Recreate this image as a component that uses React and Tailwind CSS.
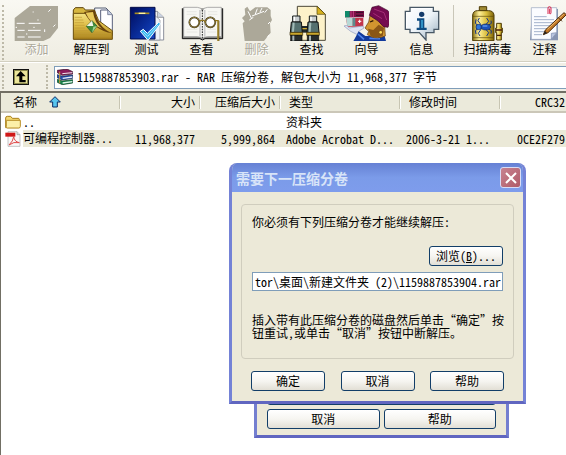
const buttonClass =
  "flex h-5 items-center justify-center rounded-[3px] border border-[#123e68] bg-gradient-to-b from-white via-[#f6f5f1] to-[#e2dfd5] text-black";

function Icon({ box, children }) {
  return (
    <svg viewBox={box} className="h-9 w-[45px] shrink-0" aria-hidden="true">
      {children}
    </svg>
  );
}

function AddIcon() {
  return (
    <Icon box="42 15 135 108">
      <path d="M90 18H174V84L150 114L130 123H44V54Z" fill="#aca899" />
      <path d="M50 70H74M86 70H122M52 91H74M84 91H122M52 111H74M84 111H122M145 35L152 28M98 36H101M160 80L166 74" stroke="#fff" strokeWidth="3" fill="none" />
      <path d="M47 82H51M100 82H104M78 102H82M112 60H116M134 88V96" stroke="#fff" strokeWidth="3" fill="none" />
    </Icon>
  );
}

function ExtractIcon() {
  return (
    <Icon box="207 15 135 108">
      <defs>
        <linearGradient id="folderGold" x1="0" y1="0" x2="0" y2="1">
          <stop offset="0" stopColor="#f8ea90" />
          <stop offset="0.5" stopColor="#dfbe48" />
          <stop offset="1" stopColor="#a8801a" />
        </linearGradient>
      </defs>
      <path d="M220 30L226 23H250L256 30H300V60H220Z" fill="#d6b640" stroke="#5c430a" strokeWidth="3" />
      <path d="M284 24H318L332 38V104H284Z" fill="#f4f6fb" stroke="#555d70" strokeWidth="3" />
      <path d="M302 30H323L337 44V106H302Z" fill="#fff" stroke="#59617b" strokeWidth="3" />
      <path d="M323 30V44H337" fill="#c3cce0" stroke="#59617b" strokeWidth="2" />
      <path d="M220 40H256L284 33L296 62L337 92V118H220Z" fill="url(#folderGold)" stroke="#6a4e0c" strokeWidth="3" />
      <path d="M252 36L285 30Q292 82 337 100Q282 92 252 36Z" fill="#68430d" />
      <path d="M257 38L279 36Q284 70 306 86Q272 74 257 38Z" fill="#e8c95b" />
      <path d="M224 52H246M224 60H250M224 68H252M224 76H254M224 84H256M224 92H266M224 100H330M224 108H332" stroke="#bf9935" strokeWidth="2" />
      <path d="M276 62L291 78L276 98L259 79Z" fill="#3e8b3b" stroke="#234f22" strokeWidth="2" />
      <path d="M260 78L276 62L280 78Z" fill="#f2f6e9" />
      <path d="M276 98L280 80L291 78Z" fill="#9ed48c" />
    </Icon>
  );
}

function TestIcon() {
  return (
    <Icon box="372 15 135 108">
      <defs>
        <linearGradient id="bookBlue" x1="0" y1="0" x2="1" y2="1">
          <stop offset="0" stopColor="#000c5c" />
          <stop offset="0.6" stopColor="#0a2f9e" />
          <stop offset="1" stopColor="#1747c8" />
        </linearGradient>
      </defs>
      <path d="M446 34H472L491 52V120H446Z" fill="#fff" stroke="#8a8f9c" strokeWidth="3" />
      <path d="M446 44H462L480 60V120H446Z" fill="#eef1f7" stroke="#8a8f9c" strokeWidth="2" />
      <path d="M472 34V52H491" fill="#ccd4e2" stroke="#777" strokeWidth="2" />
      <path d="M391 22H465V117H391Z" fill="url(#bookBlue)" stroke="#000a48" strokeWidth="3" />
      <path d="M404 40H448" stroke="#a88c22" strokeWidth="5" />
      <path d="M416 40H436" stroke="#fff4a0" strokeWidth="4" />
      <path d="M421 94L430 88L442 100L476 67L482 71L444 121Z" fill="#35b5ef" stroke="#fff" strokeWidth="3" />
      <path d="M430 97L443 109L474 75" stroke="#a6e4ff" strokeWidth="3" fill="none" />
    </Icon>
  );
}

function ViewIcon() {
  return (
    <Icon box="-3 15 135 108">
      <path d="M7 25V116H60L67 120L75 116H128V25" fill="#8b8b88" stroke="#111" strokeWidth="3" />
      <path d="M11 22H52Q65 22 67 33Q70 22 83 22H124V110H83Q70 110 67 117Q64 110 52 110H11Z" fill="#f7f7f3" stroke="#888" strokeWidth="2" />
      <path d="M60 30V110M74 30V110" stroke="#ccc" strokeWidth="5" />
      <path d="M67 30V117" stroke="#222" strokeWidth="3" strokeDasharray="5 3" />
      <path d="M20 35H50M20 43H50M84 35H112M84 43H112M20 88H52M20 96H52M82 88H108M82 96H108" stroke="#dfdfda" strokeWidth="2" />
      <circle cx="43" cy="67" r="15" fill="#fff" stroke="#2a220c" strokeWidth="5" />
      <circle cx="91" cy="67" r="15" fill="#fff" stroke="#2a220c" strokeWidth="5" />
      <circle cx="43" cy="67" r="15" fill="none" stroke="#c6ac51" strokeWidth="2" />
      <circle cx="91" cy="67" r="15" fill="none" stroke="#c6ac51" strokeWidth="2" />
      <path d="M58 65Q67 56 76 65M105 62H116" fill="none" stroke="#8d6f12" strokeWidth="4" />
      <path d="M115 62V123" stroke="#4a380b" strokeWidth="6" />
      <path d="M114 62V123" stroke="#dec04b" strokeWidth="3" />
    </Icon>
  );
}

function DeleteIcon() {
  return (
    <Icon box="162 15 135 108">
      <path d="M186 54L196 44L194 26L202 20L210 34L226 22H262L272 30V48L276 60L270 70L272 98L252 123H194L188 70L194 64Z" fill="#aca899" />
      <path d="M204 34L214 54M216 48L252 34M226 42L232 26M240 36L246 24M254 38L262 28M208 60L220 52M264 72L270 66M262 112L268 104" stroke="#fff" strokeWidth="3" fill="none" />
    </Icon>
  );
}

function Barrel({ x }) {
  return (
    <g transform={`translate(${x} 0)`}>
      <path d="M7 48H29V66H7Z" fill="#c9ced0" stroke="#151a1a" strokeWidth="3" />
      <path d="M12 50V64" stroke="#fff" strokeWidth="4" />
      <path d="M3 66H33L36 98H0Z" fill="#55706f" stroke="#111" strokeWidth="3" />
      <path d="M10 68L8 96" stroke="#a3bbb8" strokeWidth="6" />
      <path d="M-1 97H37V106H-1Z" fill="#c9a72e" stroke="#372906" strokeWidth="2" />
      <path d="M1 106H35V123H1Z" fill="#272c2c" stroke="#000" strokeWidth="2" />
      <path d="M9 107V122" stroke="#a9b6b7" strokeWidth="6" />
    </g>
  );
}

function FindIcon() {
  return (
    <Icon box="327 15 135 108">
      <path d="M352 19H412L436 43V121H352Z" fill="#fdf2c9" stroke="#4b4738" strokeWidth="3" />
      <path d="M411 19V43H436Z" fill="#d8b21e" stroke="#4f430e" strokeWidth="2" />
      <path d="M364 78H384V98H364Z" fill="#202829" />
      <path d="M360 86H390" stroke="#d0af35" strokeWidth="4" />
      <Barrel x={331} />
      <Barrel x={381} />
    </Icon>
  );
}

function WizardIcon() {
  return (
    <Icon box="-48 15 135 108">
      <path d="M-45 33H12V52H-45Z" fill="#7c1145" />
      <path d="M-45 33H-31V52H-45Z" fill="#0f8a6a" />
      <path d="M-27 33V52M-20 33V52" stroke="#c43c86" strokeWidth="3" />
      <path d="M-12 37H10M-12 46H10" stroke="#30102a" strokeWidth="3" />
      <path d="M-42 54H10V80H-38Z" fill="#c3344b" />
      <path d="M-42 54H-22V78H-38Z" fill="#b7d9d6" />
      <path d="M-22 54H-14V78H-22Z" fill="#5d8c8e" />
      <path d="M-6 64H4M-1 59V69" stroke="#fff" strokeWidth="3" />
      <path d="M-48 78L-40 76L-32 84L8 78L12 84L-4 94L-8 104L-28 94Z" fill="#dfe4f3" stroke="#8f9bbb" strokeWidth="2" />
      <path d="M-18 120L-4 94L16 108L74 108L78 123H-20Z" fill="#123a9c" />
      <path d="M-6 102L12 118M28 115L60 116" stroke="#4f83ec" strokeWidth="5" />
      <path d="M30 46L74 78L76 108Q50 118 34 110L22 104L26 94L15 84L26 66Z" fill="#d2952f" stroke="#5e370e" strokeWidth="2" />
      <path d="M24 86L40 90L56 74L72 84L68 108Q44 116 32 108Z" fill="#8a5616" />
      <path d="M30 66L40 62" stroke="#2a1604" strokeWidth="4" />
      <path d="M28 46L36 22L56 17L84 32L95 54L84 82L70 80L54 62Z" fill="#750b50" stroke="#3d0429" strokeWidth="2" />
      <path d="M42 27L72 38L80 60M40 40L66 56" stroke="#a52f77" strokeWidth="3" fill="none" />
      <circle cx="62" cy="97" r="4" fill="#ffe15c" />
    </Icon>
  );
}

function InfoIcon() {
  return (
    <Icon box="117 15 135 108">
      <defs>
        <linearGradient id="bubble" x1="0" y1="0" x2="1" y2="1">
          <stop offset="0" stopColor="#ffffff" />
          <stop offset="0.5" stopColor="#edf3f8" />
          <stop offset="1" stopColor="#98aebf" />
        </linearGradient>
      </defs>
      <path d="M150 22H220V34H236V88H222V98H198V120L178 98H150V88H136V34H150Z" fill="url(#bubble)" stroke="#485866" strokeWidth="4" />
      <path d="M153 26H217M140 38V84" stroke="#fff" strokeWidth="3" />
      <circle cx="185" cy="43" r="8" fill="#123a6b" />
      <path d="M171 55H193V83H200V90H170V83H178V62H171Z" fill="#0d4b82" />
      <path d="M186 60V84" stroke="#42b2e5" strokeWidth="4" />
    </Icon>
  );
}

function VirusIcon() {
  return (
    <Icon box="315 15 135 108">
      <defs>
        <linearGradient id="tankGold" x1="0" y1="0" x2="1" y2="0">
          <stop offset="0" stopColor="#8d7413" />
          <stop offset="0.3" stopColor="#fff09a" />
          <stop offset="0.65" stopColor="#d9bd3c" />
          <stop offset="1" stopColor="#7d6208" />
        </linearGradient>
      </defs>
      <path d="M358 20H380V32H358Z" fill="#9f8a32" stroke="#4f3c05" strokeWidth="3" />
      <path d="M338 45Q340 32 352 32H386Q400 32 402 45V122H338Z" fill="url(#tankGold)" stroke="#4f3c05" strokeWidth="3" />
      <path d="M339 49H401M339 113H401" stroke="#5d4a0a" strokeWidth="2" />
      <path d="M410 70H424V84H427V98H424V120H410V98H407V84H410Z" fill="url(#tankGold)" stroke="#4f3c05" strokeWidth="3" />
      <path d="M408 90H426M411 106H424" stroke="#4c1c0a" strokeWidth="4" />
      <path d="M356 78L346 70L348 58M364 76L354 62L358 54M376 76L386 64L380 54M382 78L394 70L393 62M356 84L346 92L348 102M364 86L355 100L360 108M376 86L386 98L380 108M382 84L394 92L393 101" fill="none" stroke="#15358b" strokeWidth="3" />
      <ellipse cx="377" cy="81" rx="15" ry="9" fill="#1d52b9" stroke="#0a2260" strokeWidth="2" />
      <circle cx="356" cy="81" r="8" fill="#2f78dd" stroke="#0a2260" strokeWidth="2" />
      <path d="M368 78H382" stroke="#7bb4ff" strokeWidth="3" />
    </Icon>
  );
}

function CommentIcon() {
  return (
    <Icon box="486 15 135 108">
      <path d="M516 27H594V121H510Z" fill="#8795b1" />
      <path d="M514 23H590V98L574 118H514Z" fill="#fbfcff" stroke="#96a3bd" strokeWidth="2" />
      <path d="M590 98L574 100V118Z" fill="#bac6df" stroke="#7788aa" strokeWidth="2" />
      <path d="M522 50H560M522 59H582M522 68H582M522 77H576M522 86H566M522 95H554M522 104H546" stroke="#a4b2cd" strokeWidth="3" />
      <path d="M564 42V24Q564 20 568 20Q573 20 573 24V38Q573 43 569 41V26" fill="none" stroke="#d6274d" strokeWidth="3" />
      <path d="M550 104L556 90L612 38L619 44L564 98Z" fill="#c27826" stroke="#4e2a08" strokeWidth="3" />
      <path d="M562 88L611 43" stroke="#f1bc6a" strokeWidth="3" />
      <path d="M550 104L555 93L561 99Z" fill="#222" />
      <path d="M594 52L606 64" stroke="#51300d" strokeWidth="3" />
    </Icon>
  );
}

function Tool({ label, icon, disabled, wide }) {
  return (
    <button
      type="button"
      disabled={disabled}
      className={`flex shrink-0 flex-col items-center ${wide ? "w-[59px]" : "w-[55px]"} ${
        disabled ? "text-[#aca899] [text-shadow:1px_1px_0_#fff]" : "text-black"
      }`}
    >
      {icon}
      <span className="whitespace-nowrap leading-4">{label}</span>
    </button>
  );
}

function Grip() {
  return <span className="w-0 shrink-0 self-stretch border-l-2 border-dotted border-[#bdb9a8]" />;
}

function Toolbar() {
  return (
    <div className="flex h-[62px] shrink-0 overflow-hidden border-b border-[#d3d0c1] bg-gradient-to-b from-[#f9f8f2] to-[#efede2] pt-[5px] pb-px pl-0.5">
      <Grip />
      <div className="flex pl-[5px]">
        <Tool label="添加" icon={<AddIcon />} disabled />
        <Tool label="解压到" icon={<ExtractIcon />} />
        <Tool label="测试" icon={<TestIcon />} />
        <Tool label="查看" icon={<ViewIcon />} />
        <Tool label="删除" icon={<DeleteIcon />} disabled />
        <Tool label="查找" icon={<FindIcon />} />
        <Tool label="向导" icon={<WizardIcon />} />
        <Tool label="信息" icon={<InfoIcon />} />
        <span className="mx-1 h-[52px] w-px shrink-0 bg-[#c9c6b8]" />
        <Tool label="扫描病毒" icon={<VirusIcon />} wide />
        <Tool label="注释" icon={<CommentIcon />} />
      </div>
    </div>
  );
}

function ArchiveIcon() {
  return (
    <svg viewBox="0 0 48 48" className="size-4 shrink-0" aria-hidden="true">
      <path d="M1 4L30 0L47 8V15L16 19L1 11Z" fill="#8c1c5c" stroke="#2b0a20" strokeWidth="2" />
      <path d="M16 14L46 11" stroke="#f1e9ee" strokeWidth="3" />
      <path d="M1 17L16 22L47 18V28L16 33L1 26Z" fill="#2450ad" stroke="#0b1b47" strokeWidth="2" />
      <path d="M17 28L46 24" stroke="#e6ecf8" strokeWidth="4" />
      <path d="M1 31L16 36L47 32V42L16 47L1 40Z" fill="#16874e" stroke="#083219" strokeWidth="2" />
      <path d="M17 42L46 38" stroke="#e4f4ea" strokeWidth="4" />
      <path d="M8 8V43" stroke="#c99a3a" strokeWidth="3" />
    </svg>
  );
}

function AddressBar() {
  return (
    <div className="flex h-[29px] shrink-0 items-center border-t border-white bg-[#f1efe5] py-0.5 pl-0.5">
      <Grip />
      <button type="button" aria-label="向上" className="ml-[9px] size-4 shrink-0">
        <svg viewBox="0 0 48 48" className="size-4" aria-hidden="true">
          <path d="M0 0H48V48H0Z" fill="#111" />
          <path d="M3 3H45V45H3Z" fill="#8c8a4c" />
          <path d="M6 6H42V42H6Z" fill="#ebe59a" />
          <path d="M23 6L38 22H28V33H38V40H19V22H9Z" fill="#000" />
        </svg>
      </button>
      <span className="ml-[17px] flex self-stretch">
        <Grip />
      </span>
      <div className="ml-[6px] flex h-[23px] min-w-0 flex-1 items-center gap-1 border border-r-0 border-[#7f9db9] bg-white pl-0.5">
        <ArchiveIcon />
        <input
          aria-label="路径"
          readOnly
          value="1159887853903.rar - RAR 压缩分卷, 解包大小为 11,968,377 字节"
          className="h-4 min-w-0 flex-1 bg-transparent text-black outline-none"
        />
      </div>
    </div>
  );
}

function FolderIcon() {
  return (
    <svg viewBox="0 0 48 48" className="size-4 shrink-0" aria-hidden="true">
      <path d="M2 12Q2 7 7 7H17L22 13H40Q43 13 43 17V41H2Z" fill="#f3d872" stroke="#a97f18" strokeWidth="3" />
      <path d="M4 19H46V37Q46 42 41 42H7Q4 42 4 38Z" fill="#fcf0a9" stroke="#b98f28" strokeWidth="3" />
    </svg>
  );
}

function PdfIcon() {
  return (
    <svg viewBox="0 0 48 48" className="size-4 shrink-0" aria-hidden="true">
      <path d="M9 2H36L45 11V46H9Z" fill="#f8f8f8" stroke="#a7a7a7" strokeWidth="2" />
      <path d="M36 2V11H45" fill="#ddd" stroke="#999" strokeWidth="2" />
      <path d="M1 5H31V17H1Z" fill="#d01818" />
      <path d="M12 42Q25 30 26 17Q28 32 43 35Q26 31 12 42Z" fill="none" stroke="#e04848" strokeWidth="3" />
    </svg>
  );
}

const headClass =
  "relative h-5 border-b-2 border-[#cbc7b8] p-0 font-normal after:absolute after:top-[3px] after:right-0 after:h-[13px] after:w-0.5 after:border-r after:border-l after:border-r-white after:border-l-[#c7c5b2] last:after:hidden";

function FileList() {
  return (
    <div className="flex-1 border-t-2 border-l border-[#716f64]">
      <table className="w-full table-fixed border-separate border-spacing-0 whitespace-nowrap">
        <colgroup>
          <col className="w-[120px]" />
          <col className="w-20" />
          <col className="w-20" />
          <col className="w-[120px]" />
          <col className="w-[100px]" />
          <col />
        </colgroup>
        <thead className="bg-[#ebeadb]">
          <tr>
            <th className={`${headClass} pl-3 text-left`}>
              <span className="flex items-center gap-3">
                名称
                <svg viewBox="0 0 36 36" className="size-3" aria-hidden="true">
                  <path d="M18 2L34 18H25V33H11V18H2Z" fill="#58c6ee" stroke="#0b2b66" strokeWidth="3" />
                </svg>
              </span>
            </th>
            <th className={`${headClass} pr-1.5 text-right`}>大小</th>
            <th className={`${headClass} pr-1.5 text-right`}>压缩后大小</th>
            <th className={`${headClass} pl-2 text-left`}>类型</th>
            <th className={`${headClass} pl-2 text-left`}>修改时间</th>
            <th className={`${headClass} pr-px text-right`}>CRC32</th>
          </tr>
        </thead>
        <tbody>
          <tr className="h-[17px]">
            <td className="p-0 pl-1">
              <span className="flex items-center gap-0.5"><FolderIcon />..</span>
            </td>
            <td />
            <td />
            <td className="p-0 pl-[5px]">资料夹</td>
            <td />
            <td />
          </tr>
          <tr className="h-[17px] bg-[#ebe9d8]">
            <td className="bg-white p-0 pl-1">
              <span className="flex h-[17px] items-center gap-0.5">
                <PdfIcon />
                <span className="h-[17px] flex-1 bg-[#ebe9d8]">可编程控制器...</span>
              </span>
            </td>
            <td className="p-0 pr-1.5 text-right">11,968,377</td>
            <td className="p-0 pr-1.5 text-right">5,999,864</td>
            <td className="p-0 pl-[5px]">Adobe Acrobat D...</td>
            <td className="p-0 pl-[5px]">2006-3-21 1...</td>
            <td className="p-0 pr-px text-right">0CE2F279</td>
          </tr>
        </tbody>
      </table>
    </div>
  );
}

function ProgressWindow() {
  return (
    <section
      aria-label="解压进度"
      className="absolute top-[360px] left-[254px] w-[255px] border-[3px] border-[#747fd0] border-b-[#6066c0] bg-[#ece9d8] p-2.5 pt-[22px] pb-[6px]"
    >
      <div className="grid grid-cols-2 gap-x-1 gap-y-1">
        <span className={`${buttonClass} col-span-2`} />
        <button type="button" className={buttonClass}>取消</button>
        <button type="button" className={buttonClass}>帮助</button>
      </div>
    </section>
  );
}

function VolumeDialog() {
  return (
    <section
      role="dialog"
      aria-labelledby="volume-title"
      className="absolute top-[163px] left-[229px] w-[297px] overflow-hidden rounded-t-lg border-[3px] border-t-0 border-[#7482d6] border-b-[#6066c0] bg-[#ece9d8]"
    >
      <header className="-mx-[3px] flex h-[29px] items-center justify-between bg-gradient-to-b from-[#6681d4] via-[#7b9be9] to-[#7e9cec] pr-[5px] pl-[7px]">
        <h1 id="volume-title" className="text-[14px] leading-4 font-bold text-[#d8e4f8]">需要下一压缩分卷</h1>
        <button
          type="button"
          aria-label="关闭"
          className="flex size-[21px] items-center justify-center rounded-[3px] border border-[#d9dcf5] bg-gradient-to-br from-[#c78391] to-[#b05b68]"
        >
          <svg viewBox="0 0 12 12" className="size-3" aria-hidden="true">
            <path d="M1 1L11 11M11 1L1 11" stroke="#fff" strokeWidth="2" />
          </svg>
        </button>
      </header>
      <div className="px-[9px] pt-3 pb-2.5">
        <div className="rounded-[4px] border border-[#d0cdbe] px-2.5 pt-[9px] pb-[19px]">
          <label htmlFor="volume-path" className="block leading-4">你必须有下列压缩分卷才能继续解压:</label>
          <button type="button" className={`${buttonClass} mt-4 ml-auto w-[74px]`}>
            浏览(<u>B</u>)...
          </button>
          <input
            id="volume-path"
            defaultValue="tor\桌面\新建文件夹 (2)\1159887853904.rar"
            className="mt-[6px] block h-[19px] w-full border border-[#7f9db9] bg-white pl-0.5 text-black outline-none"
          />
          <p className="mt-[22px] leading-[13px] whitespace-nowrap">
            插入带有此压缩分卷的磁盘然后单击“确定”按
            <br />
            钮重试,或单击“取消”按钮中断解压。
          </p>
        </div>
        <div className="mt-3 flex justify-between px-2.5">
          <button type="button" className={`${buttonClass} w-[74px]`}>确定</button>
          <button type="button" className={`${buttonClass} w-[74px]`}>取消</button>
          <button type="button" className={`${buttonClass} w-[74px]`}>帮助</button>
        </div>
      </div>
    </section>
  );
}

export default function App() {
  return (
    <main
      lang="zh-CN"
      className="relative flex min-h-screen flex-col overflow-hidden bg-white font-['Noto_Sans_Mono_CJK_SC','Noto_Sans_CJK_SC',monospace] text-[12px] leading-4 text-black"
    >
      <Toolbar />
      <AddressBar />
      <FileList />
      <ProgressWindow />
      <VolumeDialog />
    </main>
  );
}
